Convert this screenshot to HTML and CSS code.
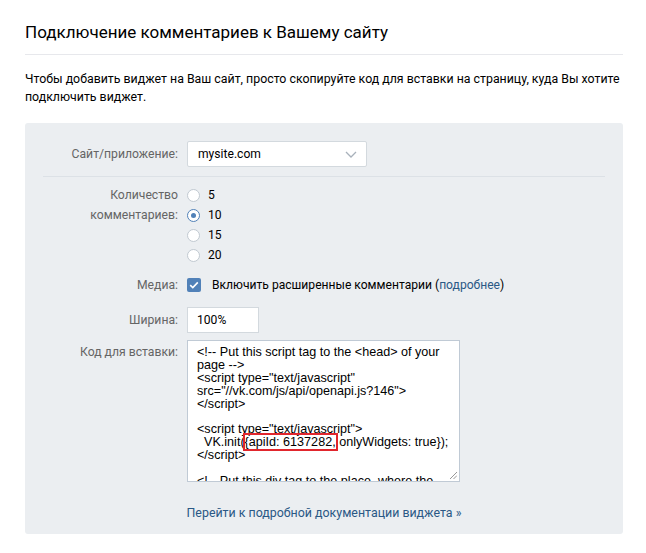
FILE: index.html
```html
<!DOCTYPE html>
<html lang="ru">
<head>
<meta charset="UTF-8">
<title>Подключение комментариев</title>
<link rel="stylesheet" href="styles.css">
</head>
<body>
<div class="page">
  <h1 class="title">Подключение комментариев к Вашему сайту</h1>
  <p class="intro">Чтобы добавить виджет на Ваш сайт, просто скопируйте код для вставки на страницу, куда Вы хотите подключить виджет.</p>

  <div class="panel">
    <div class="panel-body">
      <div class="row">
        <div class="label">Сайт/приложение:</div>
        <div class="select">
          <span>mysite.com</span>
          <svg class="chevron" width="12" height="7" viewBox="0 0 12 7"><path d="M1 1l5 5 5-5" fill="none" stroke="#a8b1bb" stroke-width="1.3"/></svg>
        </div>
      </div>
      <div class="sep"></div>
      <div class="row row-radios">
        <div class="label">Количество<br>комментариев:</div>
        <div class="radios">
          <div class="radio-item"><span class="radio"></span>5</div>
          <div class="radio-item"><span class="radio on"></span>10</div>
          <div class="radio-item"><span class="radio"></span>15</div>
          <div class="radio-item"><span class="radio"></span>20</div>
        </div>
      </div>
      <div class="row row-media">
        <div class="label">Медиа:</div>
        <div class="check-item">
          <span class="checkbox"><svg width="10" height="8" viewBox="0 0 10 8"><path d="M1.2 4.2l2.6 2.4L8.8 1.4" fill="none" stroke="#fff" stroke-width="1.6"/></svg></span>
          Включить расширенные комментарии (<a href="#">подробнее</a>)
        </div>
      </div>
      <div class="row row-width">
        <div class="label">Ширина:</div>
        <div class="input">100%</div>
      </div>
      <div class="row row-code">
        <div class="label">Код для вставки:</div>
        <div class="code"><div class="code-text">&lt;!-- Put this script tag to the &lt;head&gt; of your
page --&gt;
&lt;script type="text/javascript"
src="//vk.com/js/api/openapi.js?146"&gt;
&lt;/script&gt;

&lt;script type="text/javascript"&gt;
  VK.init(<span class="mark">{apiId: 6137282,</span> onlyWidgets: true});
&lt;/script&gt;

&lt;!-- Put this div tag to the place, where the
Comments block will be --&gt;</div>
          <svg class="grip" width="7" height="7" viewBox="0 0 7 7"><path d="M7 0L0 7M7 3.5L3.5 7" stroke="#8c8c8c" stroke-width="0.9"/></svg>
        </div>
      </div>
    </div>
    <div class="panel-footer">
      <a href="#">Перейти к подробной документации виджета »</a>
    </div>
  </div>
</div>
</body>
</html>
```
FILE: styles.css
```css
* { margin: 0; padding: 0; box-sizing: border-box; }
body {
  font-family: Roboto, "Liberation Sans", sans-serif;
  font-size: 12.1px;
  color: #000;
  background: #fff;
}
a { color: #2a5885; text-decoration: none; }

.page { width: 646px; padding: 20px 23px 20px 25px; }

.title {
  font-size: 17px; font-weight: normal; line-height: 24px;
  padding-bottom: 10px;
  border-bottom: 1px solid #e7e8ec;
}
.intro { margin-top: 15px; line-height: 18px; font-size: 12.35px; }

.panel {
  margin-top: 17px;
  background: #ebeef1;
  border-radius: 3px;
}
.panel-body { padding: 18px 18px 9px; }

.row { display: flex; gap: 9px; }
.label {
  width: 135px; flex-shrink: 0;
  text-align: right; color: #656565;
  line-height: 20px; font-size: 12.2px;
}

.select {
  width: 180px; height: 26px;
  background: #fff; border: 1px solid #d3d9de; border-radius: 2px;
  display: flex; align-items: center; justify-content: space-between;
  padding: 0 9px 0 10px;
}
.row:first-child .label { line-height: 26px; }

.sep { height: 1px; background: #dce1e6; margin: 9px 0 8px; }

.radios { display: flex; flex-direction: column; }
.radio-item { display: flex; align-items: center; gap: 8px; height: 20px; line-height: 20px; }
.radio {
  width: 13px; height: 13px; border-radius: 50%;
  background: #fff; border: 1px solid #c1c9d1;
  display: flex; align-items: center; justify-content: center;
}
.radio.on { border-color: #5181b8; }
.radio.on::after {
  content: ""; width: 5px; height: 5px; border-radius: 50%; background: #5181b8;
}

.row-media { margin-top: 10px; }
.check-item { display: flex; align-items: center; line-height: 20px; }
.checkbox {
  width: 14px; height: 14px; border-radius: 2px;
  background: #5181b8; margin-right: 11px;
  display: flex; align-items: center; justify-content: center;
}

.row-width { margin-top: 12px; }
.row-width .label { line-height: 26px; }
.input {
  width: 72px; height: 26px;
  background: #fff; border: 1px solid #d3d9de;
  padding: 0 9px; line-height: 24px;
}

.row-code { margin-top: 7px; }
.row-code .label { line-height: 24px; }
.code {
  position: relative;
  width: 273px; height: 142px;
  background: #fff; border: 1px solid #c0cad5;
  overflow: hidden;
  padding: 5px 8px 0 9px;
}
.code-text {
  font-family: "Liberation Sans", Arial, sans-serif;
  font-size: 12.6px; line-height: 12.9px;
  white-space: pre; color: #000;
}
.mark { outline: 2px solid #e1262d; outline-offset: 0; }
.grip { position: absolute; right: 2px; bottom: 2px; }

.panel-footer {
  text-align: center;
  padding: 13px 0 12px;
  line-height: 18px;
  font-size: 12.4px;
}
```
